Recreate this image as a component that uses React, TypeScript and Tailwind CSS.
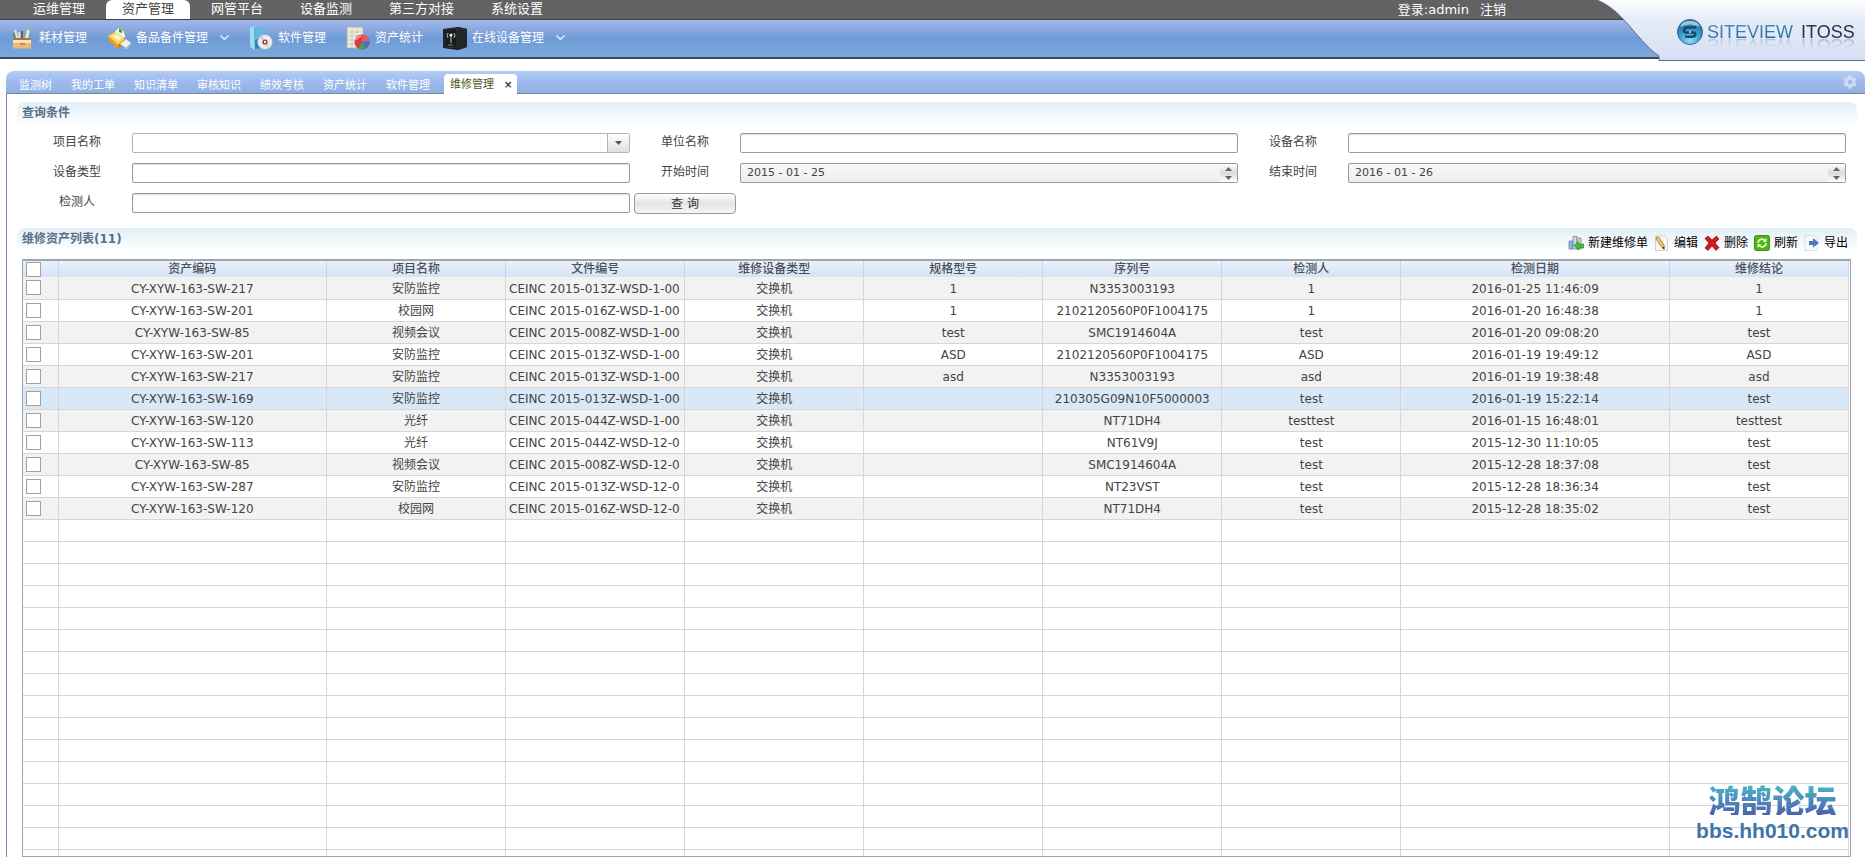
import type { ReactNode } from "react";
import { FaCog } from "react-icons/fa";

const menus = ["运维管理", "资产管理", "网管平台", "设备监测", "第三方对接", "系统设置"];
const tabs = ["监测树", "我的工单", "知识清单", "审核知识", "绩效考核", "资产统计", "软件管理"];
const columns = ["资产编码", "项目名称", "文件编号", "维修设备类型", "规格型号", "序列号", "检测人", "检测日期", "维修结论"];

const rows = [
	["CY-XYW-163-SW-217", "安防监控", "CEINC 2015-013Z-WSD-1-00", "交换机", "1", "N3353003193", "1", "2016-01-25 11:46:09", "1"],
	["CY-XYW-163-SW-201", "校园网", "CEINC 2015-016Z-WSD-1-00", "交换机", "1", "2102120560P0F1004175", "1", "2016-01-20 16:48:38", "1"],
	["CY-XYW-163-SW-85", "视频会议", "CEINC 2015-008Z-WSD-1-00", "交换机", "test", "SMC1914604A", "test", "2016-01-20 09:08:20", "test"],
	["CY-XYW-163-SW-201", "安防监控", "CEINC 2015-013Z-WSD-1-00", "交换机", "ASD", "2102120560P0F1004175", "ASD", "2016-01-19 19:49:12", "ASD"],
	["CY-XYW-163-SW-217", "安防监控", "CEINC 2015-013Z-WSD-1-00", "交换机", "asd", "N3353003193", "asd", "2016-01-19 19:38:48", "asd"],
	["CY-XYW-163-SW-169", "安防监控", "CEINC 2015-013Z-WSD-1-00", "交换机", "", "210305G09N10F5000003", "test", "2016-01-19 15:22:14", "test"],
	["CY-XYW-163-SW-120", "光纤", "CEINC 2015-044Z-WSD-1-00", "交换机", "", "NT71DH4", "testtest", "2016-01-15 16:48:01", "testtest"],
	["CY-XYW-163-SW-113", "光纤", "CEINC 2015-044Z-WSD-12-0", "交换机", "", "NT61V9J", "test", "2015-12-30 11:10:05", "test"],
	["CY-XYW-163-SW-85", "视频会议", "CEINC 2015-008Z-WSD-12-0", "交换机", "", "SMC1914604A", "test", "2015-12-28 18:37:08", "test"],
	["CY-XYW-163-SW-287", "安防监控", "CEINC 2015-013Z-WSD-12-0", "交换机", "", "NT23VST", "test", "2015-12-28 18:36:34", "test"],
	["CY-XYW-163-SW-120", "校园网", "CEINC 2015-016Z-WSD-12-0", "交换机", "", "NT71DH4", "test", "2015-12-28 18:35:02", "test"],
];
const SELECTED = 5;
const EMPTY_ROWS = 16;

function PencilBoxIcon() {
	return (
		<svg width="24" height="24" viewBox="0 0 24 24">
			<path d="M5 4l3 10M9 6l1 9" stroke="#e8e0d0" strokeWidth="2" />
			<path d="M12 5v10" stroke="#6b4a2a" strokeWidth="1.5" />
			<path d="M3 7l3 8" stroke="#6c8a3a" strokeWidth="1.5" />
			<path d="M17 3l3 1-2 11h-4z" fill="#e6ecd8" stroke="#9cab7c" strokeWidth=".6" />
			<path d="M3 14l3-2h13l2 2z" fill="#a8743c" />
			<path d="M3 14h18v8.500H3z" fill="#e8b87c" />
			<path d="M3 14h18v3H3z" fill="#fbe0b4" />
			<path d="M10 17h5v1.500h-5z" fill="#b87c40" />
		</svg>
	);
}

function SpareBoxIcon() {
	return (
		<svg width="24" height="24" viewBox="0 0 24 24">
			<path d="M7 6l5-5 5 4 2 6-8 4z" fill="#eef6e0" stroke="#7ba05a" strokeWidth=".7" />
			<path d="M12 2l3 2v3l-3-1z" fill="#3f9a4c" />
			<path d="M1 10l7-4 10 7-7 6z" fill="#ffd257" />
			<path d="M5 10l4-2 6 4-4 3z" fill="#fff3bd" />
			<path d="M1 10l10 9v4L2 15z" fill="#f09a1c" />
			<path d="M11 19l7-6v4l-7 6z" fill="#d97c10" />
			<path d="M13 18l6-5 5 4-5 5z" fill="#f3f1ee" stroke="#b8b4ac" strokeWidth=".6" />
			<path d="M15 22l5 1 4-5v-1l-5 5z" fill="#c8c2b8" />
		</svg>
	);
}

function SoftwareIcon() {
	return (
		<svg width="24" height="24" viewBox="0 0 24 24">
			<path d="M1 2l5-2v24l-5-3z" fill="#9fdcf0" />
			<path d="M5 1h10v20l-9 2z" fill="#2b86b8" />
			<path d="M5 1h10v9L6 14z" fill="#64b8dc" />
			<circle cx="16" cy="16" r="7.500" fill="#e9ebf1" stroke="#9aa4b8" strokeWidth=".7" />
			<path d="M16 16l-6-4a7 7 0 0 1 4-3z" fill="#d9c8ec" />
			<path d="M16 16l6 4a7 7 0 0 1-4 3z" fill="#c4e4dc" />
			<circle cx="16" cy="16" r="2.600" fill="#a42c38" />
			<circle cx="16" cy="16" r="1.200" fill="#fff" />
		</svg>
	);
}

function StatsIcon() {
	return (
		<svg width="24" height="24" viewBox="0 0 24 24">
			<path d="M1 1h16v21H1z" fill="#ecebe2" stroke="#a9a99c" strokeWidth=".7" />
			<path d="M1 6h16M1 10h16M1 14h16M1 18h16M6 1v21M11 1v21" stroke="#c4c4b8" strokeWidth=".8" />
			<circle cx="16" cy="16" r="7.500" fill="#dc3840" />
			<path d="M16 16V8.500a7.500 7.500 0 0 1 6.500 11z" fill="#e45a5e" />
			<path d="M16 16l7.500-1a7.500 7.500 0 0 1-4 7.500z" fill="#3e74d0" />
			<path d="M16 16l3.500 6.500a7.500 7.500 0 0 1-7 0z" fill="#3fa648" />
			<path d="M10 14a7 7 0 0 1 5-4" stroke="#f6a0a0" strokeWidth="1.500" fill="none" />
		</svg>
	);
}

function DeviceIcon() {
	return (
		<svg width="24" height="24" viewBox="0 0 24 24">
			<path d="M0 3l15-2 9 2v18l-9 3-15-2z" fill="#141617" />
			<path d="M15 1l9 2v18l-9 3z" fill="#24272a" />
			<path d="M1 4l13-2v20L1 21z" fill="#1a1d1e" stroke="#4b5052" strokeWidth=".5" />
			<path d="M8 9v8M5 7q-2 3 0 5M11 7q2 3 0 5" stroke="#b4bcbe" strokeWidth="1" fill="none" />
			<circle cx="8" cy="9" r="1.600" fill="#e6eaeb" />
			<path d="M5 19h5" stroke="#5aa04c" />
		</svg>
	);
}

function Chevron() {
	return (
		<svg width="9" height="6" viewBox="0 0 9 6" className="ml-3">
			<path d="M.5.500l4 4 4-4" fill="none" stroke="#d8f4f8" strokeWidth="1.500" />
		</svg>
	);
}

const tools: { label: string; icon: ReactNode; more?: boolean }[] = [
	{ label: "耗材管理", icon: <PencilBoxIcon /> },
	{ label: "备品备件管理", icon: <SpareBoxIcon />, more: true },
	{ label: "软件管理", icon: <SoftwareIcon /> },
	{ label: "资产统计", icon: <StatsIcon /> },
	{ label: "在线设备管理", icon: <DeviceIcon />, more: true },
];

const actions: { label: string; icon: ReactNode }[] = [
	{
		label: "新建维修单",
		icon: (
			<>
				<path d="M1 6h4v8H1z" fill="#8fb4dc" stroke="#54789c" strokeWidth=".7" />
				<path d="M5 1.500h4V14H5z" fill="#c8dcf0" stroke="#54789c" strokeWidth=".7" />
				<path d="M9 3h4v11H9z" fill="#e8c8b8" stroke="#a07060" strokeWidth=".7" />
				<path d="M6 10.500l4.500-4v2.500h5v4h-5V15z" fill="#3cc03c" stroke="#1c8c24" strokeWidth=".7" />
			</>
		),
	},
	{
		label: "编辑",
		icon: (
			<>
				<path d="M1.500 1h9l3 3v11.500h-12z" fill="#f7f7f5" stroke="#c2c2be" strokeWidth=".7" />
				<path d="M2.500 2l2.500.500 5.500 8.500-.5 3-2-1.500L2 4z" fill="#f0c060" stroke="#96702c" strokeWidth=".7" />
				<path d="M10 11.500l.5 3-2.500-1.500z" fill="#33302c" />
			</>
		),
	},
	{
		label: "删除",
		icon: <path d="M1 3.500L4 1l4 4 4.500-4L15 4l-4 4 4 4.500L12 15.500l-4-4.500-4 4.500L1 13l4-5z" fill="#d01c1c" stroke="#8c0c10" strokeWidth=".7" />,
	},
	{
		label: "刷新",
		icon: (
			<>
				<rect x=".5" y=".5" width="15" height="15" rx="2" fill="#4cb414" stroke="#38940c" />
				<path d="M4 8a4 4 0 0 1 7-2.500M12 8a4 4 0 0 1-7 2.500" fill="none" stroke="#e4fcd8" strokeWidth="1.700" />
				<path d="M12.500 3v4h-4zM3.500 13V9h4z" fill="#e4fcd8" />
			</>
		),
	},
	{
		label: "导出",
		icon: (
			<>
				<path d="M1 .5h9l3 3v12H1z" fill="#f6f8fc" stroke="#ccd4e0" strokeWidth=".7" />
				<path d="M5 6h4V3l6 5-6 4.500V10H5z" fill="#5078b8" />
			</>
		),
	},
];

function Brand() {
	return (
		<div className="absolute top-0 right-0 w-[268px] h-[61px]">
			<svg width="268" height="61" viewBox="0 0 268 61" className="absolute inset-0">
				<defs>
					<linearGradient id="swoosh" x1="0" y1="0" x2="0" y2="1">
						<stop offset="0" stopColor="#fdfefe" />
						<stop offset=".3" stopColor="#e6edf8" />
						<stop offset="1" stopColor="#d8def2" />
					</linearGradient>
					<radialGradient id="ball" cx=".5" cy=".85" r=".85">
						<stop offset="0" stopColor="#8fe0f8" />
						<stop offset=".5" stopColor="#3c9ccc" />
						<stop offset="1" stopColor="#1c608c" />
					</radialGradient>
				</defs>
				<path d="M0 0C10 4 19 11 27 20C40 34 50 48 62 56V60.500H268V0Z" fill="url(#swoosh)" />
				<path d="M0 0C10 4 19 11 27 20C40 34 50 48 62 56V60.500H268" fill="none" stroke="#5c6c90" />
				<circle cx="93" cy="32" r="12.500" fill="url(#ball)" stroke="#2c6c98" />
				<path d="M83 27a10.500 9 0 0 1 20 0q-10-5-20 0z" fill="#cdeaf6" opacity=".7" />
				<path d="M99 27.500h-8q-4 0-4 3t4 2h5q3 0 2 3-2 2-10 1" fill="none" stroke="#174a70" strokeWidth="2.500" />
				<circle cx="93" cy="32" r="1" fill="#dff4fb" />
			</svg>
			<div className="relative flex gap-2 pl-[110px] pt-[18px] font-['Liberation_Sans',sans-serif] text-lg leading-7 whitespace-nowrap [-webkit-box-reflect:below_-15px_linear-gradient(transparent_62%,rgba(0,0,0,0.5))]">
				<span className="bg-linear-to-b from-[#4a9cc4] to-[#1c5c90] bg-clip-text text-transparent">SITEVIEW</span>
				<span className="text-[#24344c]">ITOSS</span>
			</div>
		</div>
	);
}

function SectionTitle({ children, actions }: { children: ReactNode; actions?: ReactNode }) {
	return (
		<div className="flex items-start justify-between h-6 mr-2 pl-[5px] pr-[9px] rounded-t-lg bg-linear-to-b from-[#e2f0f7] to-white">
			<h2 className="text-xs leading-[22px] font-bold text-[#56708a]">{children}</h2>
			{actions}
		</div>
	);
}

function Field({ id, label, children }: { id: string; label: string; children: ReactNode }) {
	return (
		<div className="flex h-5">
			<label htmlFor={id} className="w-[110px] text-center leading-[18px] shrink-0">{label}</label>
			{children}
		</div>
	);
}

const box = "h-5 border border-[#9a9a9a] rounded-xs text-[11px]";

function TextField({ id, label }: { id: string; label: string }) {
	return (
		<Field id={id} label={label}>
			<input id={id} type="text" className={`${box} flex-1 min-w-0 px-1.5 bg-white shadow-[inset_0_1px_1px_#ddd]`} />
		</Field>
	);
}

function DateField({ id, label, value }: { id: string; label: string; value: string }) {
	return (
		<Field id={id} label={label}>
			<div className={`${box} flex flex-1 min-w-0 bg-linear-to-b from-[#f8f8f8] to-[#efefef]`}>
				<input id={id} type="text" defaultValue={value} className="flex-1 min-w-0 px-1.5 bg-transparent" />
				<div className="flex flex-col w-[17px] bg-linear-to-b from-white via-[#dcdcdc] to-white">
					<button type="button" aria-label="增加" className="flex-1 flex items-center justify-center">
						<svg width="7" height="4" viewBox="0 0 7 4"><path d="M3.500 0L7 4H0z" fill="#666" /></svg>
					</button>
					<button type="button" aria-label="减少" className="flex-1 flex items-center justify-center">
						<svg width="7" height="4" viewBox="0 0 7 4"><path d="M3.500 4L7 0H0z" fill="#666" /></svg>
					</button>
				</div>
			</div>
		</Field>
	);
}

function Check({ label }: { label: string }) {
	return <input type="checkbox" aria-label={label} className="block appearance-none size-[15px] ml-[3px] border border-[#a0a0a0] bg-white" />;
}

export default function App() {
	return (
		<div className="relative flex flex-col h-screen overflow-hidden bg-white font-['DejaVu_Sans','Noto_Sans_CJK_SC',sans-serif] text-xs text-[#444]">
			<header className="relative">
				<nav className="flex gap-px h-[19px] pl-[15px] bg-[#626262] text-[13px] leading-[18px] text-white">
					{menus.map((m) => (
						<a key={m} href="#" className={m === "资产管理" ? "px-4 mx-0.5 bg-white text-[#444] rounded-t-md" : "px-[18px]"}>
							{m}
						</a>
					))}
					<div className="flex gap-[11px] ml-auto mr-[359px] leading-5">
						<span>登录:admin</span>
						<a href="#">注销</a>
					</div>
				</nav>
				<div className="flex items-center gap-5 h-10 pl-[10px] pb-0.5 border-t border-b-2 border-t-[#39424e] border-b-[#3c4858] bg-linear-to-b from-[#a4b8e8] via-[#6f9bd6] to-[#7aaade] text-white">
					{tools.map((t) => (
						<a key={t.label} href="#" className="flex items-center">
							{t.icon}
							<span className="ml-[5px]">{t.label}</span>
							{t.more && <Chevron />}
						</a>
					))}
				</div>
				<Brand />
			</header>

			<main className="flex flex-col flex-1 min-h-0 mt-3 ml-1.5">
				<div className="flex items-end h-[23px] pl-[13px] border-b border-[#7486ac] rounded-t-lg bg-linear-to-b from-[#b2cdf4] via-[#a0b8f0] to-[#8eb2dc] text-[11px] leading-[14px] text-white">
					{tabs.map((t) => (
						<a key={t} href="#" className="mr-[19px]">{t}</a>
					))}
					<div className="flex items-center h-5 -ml-[5px] -mb-px px-1.5 bg-white rounded-t-sm text-[#4c5a1e]">
						<a href="#" className="pt-0.5">维修管理</a>
						<button type="button" aria-label="关闭" className="w-[17px] pt-0.5 pl-2.5 font-bold text-[10px] text-[#333]">×</button>
					</div>
					<button type="button" aria-label="设置" className="ml-auto mr-2 mb-1 text-[#c9dcf6]">
						<FaCog size={14} />
					</button>
				</div>

				<div className="flex flex-col flex-1 min-h-0 pl-[10px] pt-2 border-l border-[#6f86b0]">
					<SectionTitle>查询条件</SectionTitle>
					<form className="grid grid-cols-3 gap-y-2.5 pl-[5px] pr-[19px] mt-[7px] h-[87px] content-start mb-2">
						<Field id="project" label="项目名称">
							<div className={`${box} flex flex-1 min-w-0 relative border-[#b4b4b4]`}>
								<select id="project" className="appearance-none flex-1 min-w-0 px-1.5 bg-transparent">
									<option></option>
								</select>
								<span className="flex items-center justify-center w-[22px] border-l border-[#b4b4b4] bg-linear-to-b from-white to-[#dedede] pointer-events-none">
									<svg width="7" height="4" viewBox="0 0 7 4"><path d="M3.500 4L7 0H0z" fill="#555" /></svg>
								</span>
							</div>
						</Field>
						<TextField id="unit" label="单位名称" />
						<TextField id="device" label="设备名称" />
						<TextField id="type" label="设备类型" />
						<DateField id="start" label="开始时间" value="2015 - 01 - 25" />
						<DateField id="end" label="结束时间" value="2016 - 01 - 26" />
						<TextField id="tester" label="检测人" />
						<div>
							<button
								type="submit"
								className="block w-[102px] h-[21px] ml-1 border border-[#9a9a9a] rounded-sm bg-linear-to-b from-white via-[#e4e4e4] to-[#f6f6f6] text-[#333]"
							>
								查 询
							</button>
						</div>
					</form>

					<SectionTitle
						actions={
							<div className="flex gap-1.5 pt-[7px] text-black leading-4">
								{actions.map((a) => (
									<button key={a.label} type="button" className="flex items-center gap-1">
										<svg width="16" height="16" viewBox="0 0 16 16">{a.icon}</svg>
										{a.label}
									</button>
								))}
							</div>
						}
					>
						维修资产列表(11)
					</SectionTitle>

					<div className="flex-1 min-h-0 overflow-hidden mt-[7px] ml-[5px] mr-[14px] border border-t-2 border-[#9ea6b0] pr-px">
						<table className="w-full table-fixed border-collapse text-center whitespace-nowrap leading-4">
							<colgroup>
								<col className="w-[35px]" />
								{columns.map((c) => (
									<col key={c} className={c === "资产编码" || c === "检测日期" ? "w-[15%]" : "w-[10%]"} />
								))}
							</colgroup>
							<thead>
								<tr className="h-4 bg-linear-to-b from-[#eaf1fb] to-[#d6e2f6]">
									<th className="p-0 border-r border-[#ccd5e6]"><Check label="全选" /></th>
									{columns.map((c) => (
										<th key={c} className="p-0 font-medium border-r border-[#ccd5e6] text-[#4a4f58]">{c}</th>
									))}
								</tr>
							</thead>
							<tbody>
								{rows.map((r, i) => (
									<tr key={i} className={`h-[22px] border-b border-[#d6d6d6] ${i === SELECTED ? "bg-[#d9e8f6]" : i % 2 ? "bg-white" : "bg-[#f2f2f2]"}`}>
										<td className="p-0 border-r border-[#d6d6d6]"><Check label={r[0]} /></td>
										{r.map((cell, j) => (
											<td key={j} className={`pt-0.5 pb-0 px-[3px] border-r border-[#d6d6d6] overflow-hidden ${j === 2 ? "text-left" : ""}`}>{cell}</td>
										))}
									</tr>
								))}
								{Array.from({ length: EMPTY_ROWS }, (_, i) => (
									<tr key={i} className="h-[22px] border-b border-[#d6d6d6]">
										<td className="border-r border-[#d6d6d6]" />
										{columns.map((c) => (
											<td key={c} className="border-r border-[#d6d6d6]" />
										))}
									</tr>
								))}
							</tbody>
						</table>
					</div>
				</div>
			</main>

			<div className="absolute right-4 bottom-3 flex flex-col items-center pointer-events-none whitespace-nowrap">
				<span className="bg-linear-to-b from-[#48bcc8] to-[#4a62ac] bg-clip-text text-transparent text-[32px] leading-8 font-black font-['Noto_Sans_CJK_SC',sans-serif]">鸿鹄论坛</span>
				<span className="pt-0.5 text-[21px] leading-7 font-bold font-['Liberation_Sans',sans-serif] text-[#3f74a8]">bbs.hh010.com</span>
			</div>
		</div>
	);
}
